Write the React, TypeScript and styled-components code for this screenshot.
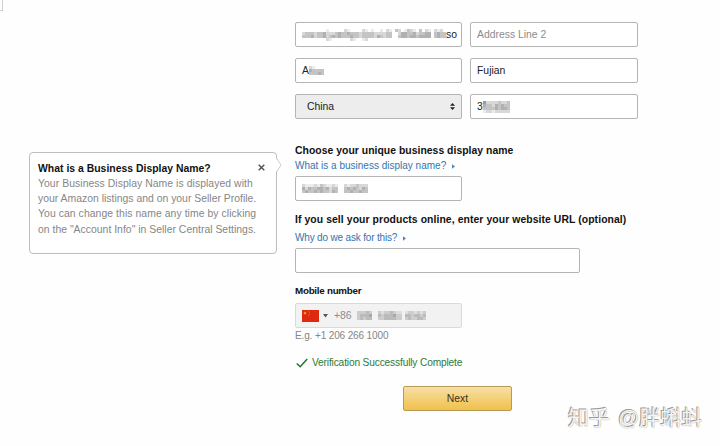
import React from "react";
import styled, { createGlobalStyle } from "styled-components";

const GlobalStyle = createGlobalStyle`
  * { box-sizing: border-box; }
  html, body { margin: 0; background: #fefefe; }
  body { font-family: "Liberation Sans", Arial, sans-serif; color: #222; overflow: hidden; }
`;

const Page = styled.main`
  position: relative;
  display: grid;
  grid-template-columns: 295px 1fr;
  width: 720px;
  height: 446px;
  overflow: hidden;
  background: #fefefe;
`;

const Corner = styled.div`
  width: 3px;
  height: 11px;
  border: solid #cfcfcf;
  border-width: 0 1.5px 1.5px 0;
`;

const Side = styled.aside`
  display: flex;
  flex-direction: column;
  gap: 141px;
`;

const Popover = styled.section`
  position: relative;
  width: 248px;
  height: 102px;
  margin-left: 29px;
  padding: 8px;
  border: 1px solid #bdbdbd;
  border-radius: 4px;
  background: #fff;
`;

const PopoverHeader = styled.header`
  display: flex;
  justify-content: space-between;
  align-items: center;
  height: 15px;
`;

const PopoverTitle = styled.h2`
  margin: 0;
  font-size: 10.4px;
  line-height: 15px;
  letter-spacing: 0.02px;
  color: #111;
  white-space: nowrap;
`;

const CloseButton = styled.button`
  display: flex;
  padding: 0;
  margin: -2px 3px 0 0;
  border: 0;
  background: none;
`;

const PopoverText = styled.p`
  margin: 0;
  font-size: 10.4px;
  line-height: 15.2px;
  color: #868686;
  white-space: nowrap;
`;

const Line = styled.span<{ $tracking: number }>`
  display: block;
  letter-spacing: ${(p) => p.$tracking}px;
`;

const Pointer = styled.svg`
  position: absolute;
  top: 5px;
  right: -6px;
`;

const Form = styled.form`
  display: flex;
  flex-direction: column;
  align-items: flex-start;
  padding-top: 22px;
`;

const AddressGrid = styled.div`
  display: grid;
  grid-template-columns: 167px 168px;
  gap: 11px 8px;
`;

const Field = styled.div<{ $width?: number; $tone?: "plain" | "select" | "disabled"; $muted?: boolean }>`
  display: flex;
  align-items: center;
  width: ${(p) => p.$width ?? 168}px;
  height: 25px;
  padding: 0 6px;
  border: 1px solid ${(p) => (p.$tone === "disabled" ? "#dadada" : "#b4b4b4")};
  border-radius: 2px;
  background: ${(p) => (p.$tone === "select" ? "#ededed" : p.$tone === "disabled" ? "#f2f2f2" : "#fff")};
  color: ${(p) => (p.$muted ? "#8c8c8c" : "#222")};
  font-size: 10.4px;
  line-height: 14px;
  white-space: nowrap;
`;

const SelectValue = styled.span`
  flex: 1;
  padding-left: 5px;
`;

const Heading = styled.h3<{ $size?: number; $top: number; $tracking?: number }>`
  margin: ${(p) => p.$top}px 0 0;
  font-size: ${(p) => p.$size ?? 10.4}px;
  line-height: 15px;
  letter-spacing: ${(p) => p.$tracking ?? 0}px;
  color: #111;
  white-space: nowrap;
`;

const HelpLink = styled.a<{ $top: number; $tracking?: number }>`
  display: flex;
  align-items: center;
  gap: 6px;
  margin: ${(p) => p.$top}px 0 3px;
  font-size: 10px;
  line-height: 14px;
  letter-spacing: ${(p) => p.$tracking ?? 0}px;
  color: #3475b0;
  white-space: nowrap;
`;

const PhoneField = styled(Field)`
  margin-top: 5px;
`;

const Hint = styled.p`
  margin: 1px 0 0;
  font-size: 10px;
  line-height: 14px;
  letter-spacing: -0.13px;
  color: #868686;
`;

const Status = styled.div`
  display: flex;
  align-items: center;
  gap: 4px;
  margin-top: 12px;
  padding-left: 1px;
  font-size: 10.2px;
  line-height: 15px;
  letter-spacing: -0.16px;
  color: #2c7a34;
`;

const NextButton = styled.button`
  width: 109px;
  height: 25px;
  margin: 16px 0 0 108px;
  padding: 0;
  border: 1px solid #b79a59;
  border-radius: 2px;
  background: linear-gradient(#f7dfa5, #f0c14b);
  font: 10.4px "Liberation Sans", Arial, sans-serif;
  color: #3b2f14;
`;

const MosaicGrid = styled.span<{ $columns: number }>`
  display: grid;
  flex: none;
  grid-template-columns: repeat(${(p) => p.$columns}, 3px);
  grid-auto-rows: 3px;
  filter: blur(0.6px);
`;

const Cell = styled.i<{ $level: number }>`
  background: rgba(60, 60, 60, ${(p) => p.$level * 0.1});
`;

function Mosaic({ rows }: { rows: string[] }) {
  return (
    <MosaicGrid $columns={rows[0].length} aria-hidden="true">
      {rows.join("").split("").map((level, i) => (
        <Cell key={i} $level={Number(level)} />
      ))}
    </MosaicGrid>
  );
}

const Spacer = styled.span<{ $width: number }>`
  flex: none;
  width: ${(p) => p.$width}px;
`;

const Watermark = styled.div`
  position: absolute;
  left: 568px;
  top: 404px;
  display: flex;
  gap: 8px;
  font-family: "Liberation Sans", "Noto Sans CJK SC", sans-serif;
  font-size: 21px;
  line-height: 28px;
  color: #f4f4f4;
  text-shadow: -1px -1px 0 #999, 0 0 1px #888;
  white-space: nowrap;
`;

const Flag = () => (
  <svg width="17" height="12" viewBox="0 0 17 12">
    <path fill="#de2910" d="M0 0h17v12H0z" />
    <path fill="#f6b629" d="m3 1.2.5 1.3h1.3l-1 .8.4 1.3L3 3.9l-1.200.7.4-1.300-1-.8h1.300z" />
    <path fill="#f09a24" d="M6 1h.7v.7H6zM7 2.500h.7v.7H7zM7 4.200h.7v.7H7zM6 5.500h.7v.7H6z" />
  </svg>
);

const SmallArrow = () => (
  <svg width="3" height="5" viewBox="0 0 3 5">
    <path fill="#4f86b8" d="M0 .3 3 2.500 0 4.700z" />
  </svg>
);

export default function App() {
  return (
    <Page>
      <GlobalStyle />
      <Side>
        <Corner />
        <Popover>
          <PopoverHeader>
            <PopoverTitle>What is a Business Display Name?</PopoverTitle>
            <CloseButton aria-label="Close">
              <svg width="7" height="7" viewBox="0 0 7 7">
                <path d="m.7.7 5.600 5.600M6.300.7.7 6.300" stroke="#555" strokeWidth="1.500" />
              </svg>
            </CloseButton>
          </PopoverHeader>
          <PopoverText>
            <Line $tracking={0.06}>Your Business Display Name is displayed with</Line>
            <Line $tracking={0.01}>your Amazon listings and on your Seller Profile.</Line>
            <Line $tracking={0.07}>You can change this name any time by clicking</Line>
            <Line $tracking={0.02}>on the "Account Info" in Seller Central Settings.</Line>
          </PopoverText>
          <Pointer width="6" height="14" viewBox="0 0 6 14">
            <path d="M0 0 5 7 0 14z" fill="#fff" />
            <path d="M.5 0 5 7 .5 14" fill="none" stroke="#ccc" />
          </Pointer>
        </Popover>
      </Side>
      <Form>
        <AddressGrid>
          <Field $width={167}>
            <Mosaic rows={[
              "000000001000002100002101001021032013210302102120",
              "233323342223433433323333222233002443342334403433",
              "333423342343433343323333243233003443443444403433",
              "000000002100000021001200000000000000000000000000",
            ]} />
            <span>so</span>
          </Field>
          <Field $muted>Address Line 2</Field>
          <Field $width={167}>
            <span>A</span>
            <Mosaic rows={["21000", "43333", "33343"]} />
          </Field>
          <Field>Fujian</Field>
          <Field $tone="select" $width={167}>
            <SelectValue>China</SelectValue>
            <svg width="5" height="7" viewBox="0 0 5 7">
              <path fill="#222" d="M2.500 0 5 2.800H0zM0 4.200h5L2.500 7z" />
            </svg>
          </Field>
          <Field>
            <span>3</span>
            <Mosaic rows={["522223223", "433243433", "333343443", "122122222"]} />
          </Field>
        </AddressGrid>
        <Heading $top={24} $tracking={0.03}>Choose your unique business display name</Heading>
        <HelpLink $top={1}>What is a business display name? <SmallArrow /></HelpLink>
        <Field $width={167}>
          <Mosaic rows={["2111213211210021223222", "4243344342330034343243", "3433434332430033433433"]} />
        </Field>
        <Heading $top={11} $tracking={0.08}>If you sell your products online, enter your website URL (optional)</Heading>
        <HelpLink $top={4} $tracking={-0.17}>Why do we ask for this? <SmallArrow /></HelpLink>
        <Field $width={285} />
        <Heading $top={10} $size={9.8} $tracking={-0.26}>Mobile number</Heading>
        <PhoneField $tone="disabled" $muted $width={167}>
          <Flag />
          <Spacer $width={4} />
          <svg width="5" height="4" viewBox="0 0 5 4"><path fill="#555" d="M0 0h5L2.500 3.500z" /></svg>
          <Spacer $width={6} />
          <span>+86</span>
          <Spacer $width={2} />
          <Mosaic rows={["022232002122321101221212", "023334003233342203323323", "023233002233332202322332"]} />
        </PhoneField>
        <Hint>E.g. +1 206 266 1000</Hint>
        <Status>
          <svg width="12" height="10" viewBox="0 0 12 10">
            <path d="m.8 5.500 3.400 3.200L11.200 1" fill="none" stroke="#267030" strokeWidth="1.500" />
          </svg>
          Verification Successfully Complete
        </Status>
        <NextButton type="button">Next</NextButton>
      </Form>
      <Watermark><span>知乎</span><span>@胖蝌蚪</span></Watermark>
    </Page>
  );
}
